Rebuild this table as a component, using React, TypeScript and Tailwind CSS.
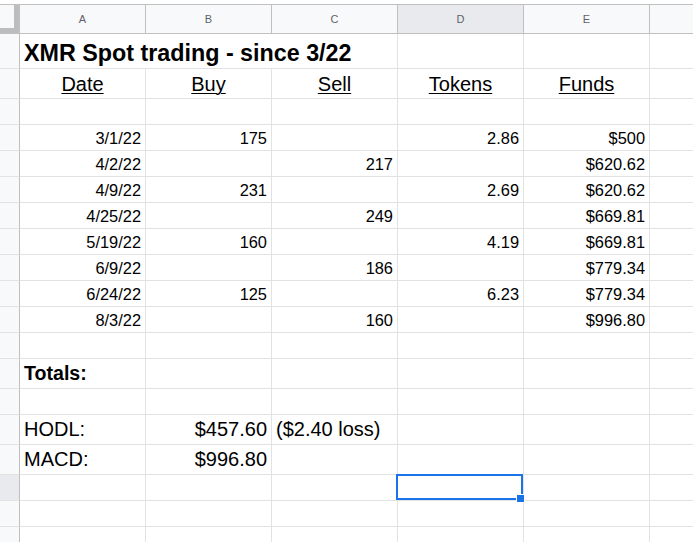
import React from 'react';

const trades: string[][] = [
  ['3/1/22', '175', '', '2.86', '$500'],
  ['4/2/22', '', '217', '', '$620.62'],
  ['4/9/22', '231', '', '2.69', '$620.62'],
  ['4/25/22', '', '249', '', '$669.81'],
  ['5/19/22', '160', '', '4.19', '$669.81'],
  ['6/9/22', '', '186', '', '$779.34'],
  ['6/24/22', '125', '', '6.23', '$779.34'],
  ['8/3/22', '', '160', '', '$996.80'],
];

const Row: React.FC<{ height: string; active?: boolean; children?: React.ReactNode }> = ({
  height,
  active,
  children,
}) => (
  <div className={`flex ${height}`}>
    <div
      className={`w-[20px] shrink-0 border-r border-b border-r-[#c0c0c0] border-b-[#e2e2e3] ${
        active ? 'bg-[#e8eaed]' : 'bg-[#f8f9fa]'
      }`}
    />
    {children}
    <div className="flex-1 border-b border-[#e2e2e3]" />
  </div>
);

const Cell: React.FC<{ className?: string; children?: React.ReactNode }> = ({ className = '', children }) => (
  <div
    className={`relative w-[126px] shrink-0 border-r border-b border-[#e2e2e3] flex items-end leading-none text-black whitespace-nowrap ${className}`}
  >
    {children}
  </div>
);

const EmptyCells = () => (
  <>
    <Cell />
    <Cell />
    <Cell />
    <Cell />
    <Cell />
  </>
);

export default function App() {
  return (
    <div className="w-[693px] h-[542px] overflow-hidden bg-white pt-[4px] font-['Liberation_Sans',Arial,sans-serif]">
      {/* column headers */}
      <div className="flex h-[30px] border-y border-[#c0c0c0] bg-[#f8f9fa]">
        <div className="w-[20px] shrink-0 border-r border-[#c0c0c0]">
          <div className="w-full h-full border-r-[5px] border-b-[5px] border-[#bdbdbd]" />
        </div>
        {['A', 'B', 'C', 'D', 'E'].map((c) => (
          <div
            key={c}
            className={`w-[126px] shrink-0 border-r border-[#c0c0c0] flex items-center justify-center text-[11px] text-[#5f6368] ${
              c === 'D' ? 'bg-[#e8eaed]' : ''
            }`}
          >
            {c}
          </div>
        ))}
        <div className="flex-1" />
      </div>

      {/* title */}
      <Row height="h-[35px]">
        <div className="w-[378px] shrink-0 border-r border-b border-[#e2e2e3] flex items-end pl-[4px] pb-[3px] leading-none text-[23.3px] font-bold text-black whitespace-nowrap">
          XMR Spot trading - since 3/22
        </div>
        <Cell />
        <Cell />
      </Row>

      {/* column titles */}
      <Row height="h-[30px]">
        {['Date', 'Buy', 'Sell', 'Tokens', 'Funds'].map((t) => (
          <Cell key={t} className="justify-center pb-[4px] text-[20px]">
            <span className="underline underline-offset-[2px] decoration-1">{t}</span>
          </Cell>
        ))}
      </Row>

      <Row height="h-[26px]">
        <EmptyCells />
      </Row>

      {trades.map((r, i) => (
        <Row key={i} height="h-[26px]">
          {r.map((v, j) => (
            <Cell key={j} className="justify-end pr-[4px] pb-[4px] text-[16.4px]">
              {v}
            </Cell>
          ))}
        </Row>
      ))}

      <Row height="h-[26px]">
        <EmptyCells />
      </Row>

      <Row height="h-[30px]">
        <Cell className="pl-[4px] pb-[4px] text-[19.6px] font-bold">Totals:</Cell>
        <Cell />
        <Cell />
        <Cell />
        <Cell />
      </Row>

      <Row height="h-[26px]">
        <EmptyCells />
      </Row>

      <Row height="h-[30px]">
        <Cell className="pl-[4px] pb-[5px] text-[20px]">HODL:</Cell>
        <Cell className="justify-end pr-[4px] pb-[5px] text-[20px]">$457.60</Cell>
        <Cell className="pl-[4px] pb-[5px] text-[20px]">($2.40 loss)</Cell>
        <Cell />
        <Cell />
      </Row>

      <Row height="h-[30px]">
        <Cell className="pl-[4px] pb-[5px] text-[20px]">MACD:</Cell>
        <Cell className="justify-end pr-[4px] pb-[5px] text-[20px]">$996.80</Cell>
        <Cell />
        <Cell />
        <Cell />
      </Row>

      <Row height="h-[26px]" active>
        <Cell />
        <Cell />
        <Cell />
        <Cell className="z-10">
          <div className="absolute left-[-2px] top-[-1px] right-0 bottom-0 border-2 border-[#1a73e8]" />
          <div className="absolute right-[-2px] bottom-[-3px] w-[9px] h-[9px] bg-[#1a73e8] border border-white" />
        </Cell>
        <Cell />
      </Row>

      <Row height="h-[26px]">
        <EmptyCells />
      </Row>

      <Row height="h-[26px]">
        <EmptyCells />
      </Row>
    </div>
  );
}
